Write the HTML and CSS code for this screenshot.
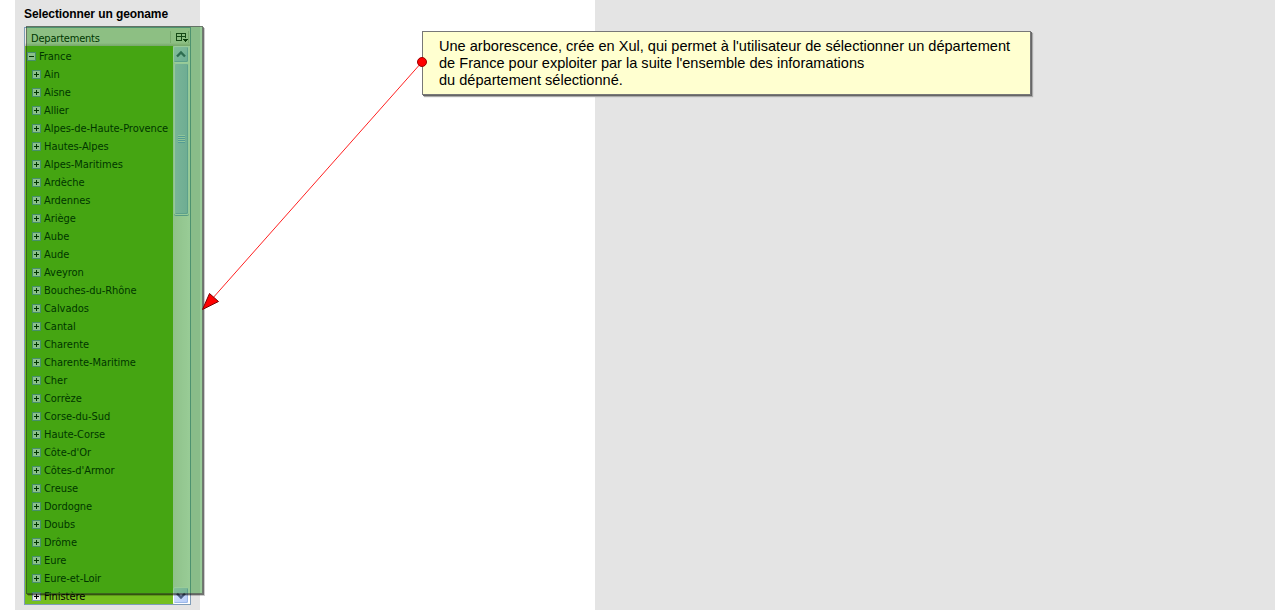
FILE: index.html
```
<!DOCTYPE html>
<html lang="fr">
<head>
<meta charset="utf-8">
<title>Selectionner un geoname</title>
<link rel="stylesheet" href="styles.css">
</head>
<body>
<div class="page">
  <aside class="sidebar">
    <h1 class="title">Selectionner un geoname</h1>
    <div class="tree">
      <div class="tree-header"><span class="label">Departements</span>
        <svg class="picker" width="20" height="18" shape-rendering="crispEdges"><path d="M.5 3v12M18.500 3v12" stroke="#c9c7b8"/><path d="M6.500 5.500h9v3h-9zM6.500 8.500v4h5M11.500 5v8M15.500 8v2" fill="none" stroke="#222"/><path d="M12 11h6l-3 3z" fill="#111"/></svg>
      </div>
      <div class="tree-body">
        <ul class="rows">
          <li class="root"><i class="box minus"></i>France</li>
          <li><i class="box"></i>Ain</li>
          <li><i class="box"></i>Aisne</li>
          <li><i class="box"></i>Allier</li>
          <li><i class="box"></i>Alpes-de-Haute-Provence</li>
          <li><i class="box"></i>Hautes-Alpes</li>
          <li><i class="box"></i>Alpes-Maritimes</li>
          <li><i class="box"></i>Ardèche</li>
          <li><i class="box"></i>Ardennes</li>
          <li><i class="box"></i>Ariège</li>
          <li><i class="box"></i>Aube</li>
          <li><i class="box"></i>Aude</li>
          <li><i class="box"></i>Aveyron</li>
          <li><i class="box"></i>Bouches-du-Rhône</li>
          <li><i class="box"></i>Calvados</li>
          <li><i class="box"></i>Cantal</li>
          <li><i class="box"></i>Charente</li>
          <li><i class="box"></i>Charente-Maritime</li>
          <li><i class="box"></i>Cher</li>
          <li><i class="box"></i>Corrèze</li>
          <li><i class="box"></i>Corse-du-Sud</li>
          <li><i class="box"></i>Haute-Corse</li>
          <li><i class="box"></i>Côte-d'Or</li>
          <li><i class="box"></i>Côtes-d'Armor</li>
          <li><i class="box"></i>Creuse</li>
          <li><i class="box"></i>Dordogne</li>
          <li><i class="box"></i>Doubs</li>
          <li><i class="box"></i>Drôme</li>
          <li><i class="box"></i>Eure</li>
          <li><i class="box"></i>Eure-et-Loir</li>
          <li><i class="box"></i>Finistère</li>
        </ul>
        <div class="scrollbar">
          <div class="button"><svg width="14" height="15"><path d="M3 9.500l4-4 4 4" fill="none" stroke="#4d6185" stroke-width="2.400"/></svg></div>
          <div class="thumb"><i class="grip"></i></div>
          <div class="track"></div>
          <div class="button"><svg width="14" height="15"><path d="M3 5.500l4 4 4-4" fill="none" stroke="#4d6185" stroke-width="2.400"/></svg></div>
        </div>
      </div>
    </div>
  </aside>
  <main class="content"></main>
  <div class="highlight"></div>
  <p class="note">Une arborescence, crée en Xul, qui permet à l'utilisateur de sélectionner un département<br>de France pour exploiter par la suite l'ensemble des inforamations<br>du département sélectionné.</p>
  <svg class="arrow" width="1280" height="615"><path d="M422 62L212 299" stroke="#ff2020"/><path d="M202.500 309.500L209.500 293.500L218.500 301.500Z" fill="#f00" stroke="#700"/><circle cx="422" cy="62" r="4.500" fill="#f00" stroke="#900"/></svg>
</div>
</body>
</html>
```
FILE: styles.css
```
body { margin: 0; background: #fff; }
.page { position: relative; display: flex; justify-content: space-between; box-sizing: border-box; width: 1280px; height: 615px; padding: 0 5px 5px 15px; overflow: hidden; }
.sidebar { box-sizing: border-box; width: 185px; height: 610px; padding: 7px 9px 0; background: #e4e4e4; }
.content { width: 680px; height: 610px; background: #e4e4e4; }
.title { margin: 0 0 5px; font: bold 12px/15px "Liberation Sans", Arial, sans-serif; letter-spacing: -.09px; white-space: nowrap; color: #000; }
.tree { box-sizing: border-box; width: 167px; height: 578px; border: 1px solid #7f9db9; background: #74bf1e; font: 11px/18px "DejaVu Sans Condensed", "DejaVu Sans", sans-serif; letter-spacing: -.05px; color: #000; }
.tree-header { display: flex; justify-content: space-between; box-sizing: border-box; height: 18px; padding-left: 6px; background: linear-gradient(#ebeadb 0 15px, #dcd9c8 16px, #c5c2b2 18px); }
.label { line-height: 21px; letter-spacing: -.2px; }
.picker { display: block; }
.tree-body { display: flex; justify-content: space-between; height: 558px; }
.rows { box-sizing: border-box; height: 558px; margin: 0; padding: 2px 0 0; width: 148px; list-style: none; overflow: hidden; }
.rows li { display: flex; align-items: center; height: 18px; padding-left: 7px; line-height: 20px; white-space: nowrap; }
.rows .root { padding-left: 2px; }
.box { flex: none; box-sizing: border-box; width: 9px; height: 9px; margin: 0 3px 1px 0; border: 1px solid #7898b5; background: linear-gradient(#000, #000) center / 5px 1px no-repeat, linear-gradient(#000, #000) center / 1px 5px no-repeat, #e9ebe8; }
.box.minus { background: linear-gradient(#000, #000) center / 5px 1px no-repeat, #e9ebe8; }
.scrollbar { display: flex; flex-direction: column; width: 17px; background: linear-gradient(90deg, #eeeee7, #fffffa); }
.button { box-sizing: border-box; width: 16px; height: 17px; border: 1px solid #fff; border-radius: 2px; background: linear-gradient(135deg, #dce7ff, #b4cbf8); box-shadow: inset -1px -1px #9bb8e8; }
.button svg { display: block; }
.thumb { display: flex; align-items: center; justify-content: center; box-sizing: border-box; width: 15px; height: 152px; margin-left: 1px; border: 1px solid #f8faff; border-radius: 2px; background: linear-gradient(90deg, #cad8fb, #b7cbf5); box-shadow: inset -1px -1px #9bb8e8, 0 1px #8faddd; }
.grip { width: 7px; height: 8px; background: repeating-linear-gradient(#eef4ff 0 1px, #8cb0f8 1px 2px); }
.track { flex: 1; }
.highlight { position: absolute; left: 26px; top: 26px; box-sizing: border-box; width: 177px; height: 568px; border: 1px solid rgba(30, 50, 30, .65); background: rgba(0, 128, 0, .4); background-clip: padding-box; box-shadow: 1px 1px rgba(0, 0, 0, .45), 2px 2px rgba(0, 0, 0, .2); }
.note { position: absolute; left: 422px; top: 31px; box-sizing: border-box; width: 609px; height: 64px; margin: 0; padding: 6px 0 0 16px; border: 1px solid #777; background: #ffffd0; box-shadow: 1px 1px #666, 2px 2px 1px #aaa; font: 14.57px/17px "Liberation Sans", Arial, sans-serif; white-space: nowrap; color: #000; }
.arrow { position: absolute; left: 0; top: 0; }
```
